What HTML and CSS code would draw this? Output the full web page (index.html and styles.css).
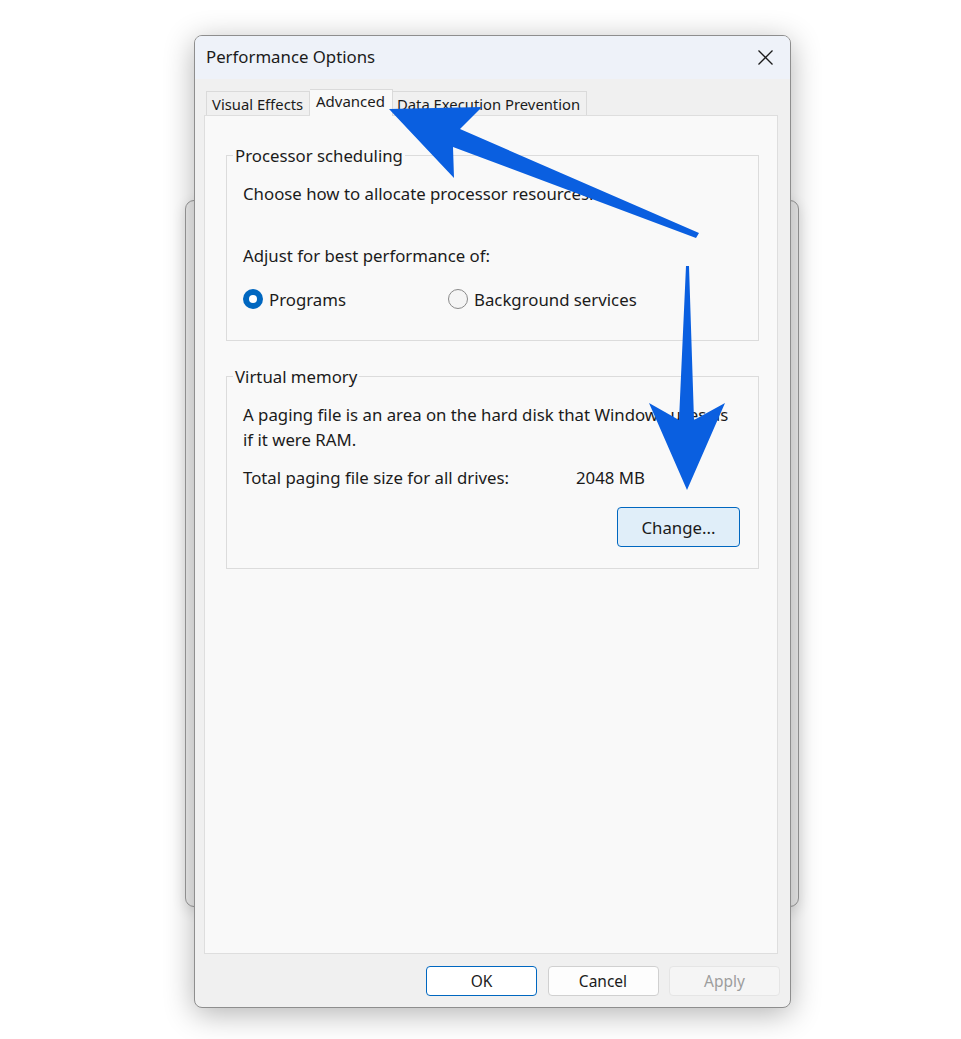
FILE: index.html
```html
<!DOCTYPE html>
<html lang="en">
<head>
<meta charset="utf-8">
<title>Performance Options</title>
<link rel="stylesheet" href="styles.css">
</head>
<body>
<div class="desk">
  <div class="win-back"></div>
  <div class="dialog">
    <div class="titlebar">
      <span class="title">Performance Options</span>
      <svg class="close" width="15" height="15" viewBox="0 0 15 15"><path d="M0.5 0.5 L14.5 14.5 M14.5 0.5 L0.5 14.5" stroke="#1b1b1b" stroke-width="1.3" fill="none"/></svg>
    </div>
    <div class="tabs">
      <div class="tab tab-ve">Visual Effects</div>
      <div class="tab tab-adv active">Advanced</div>
      <div class="tab tab-dep">Data Execution Prevention</div>
    </div>
    <div class="panel">
      <div class="group g1">
        <div class="legend">Processor scheduling</div>
        <div class="line choose">Choose how to allocate processor resources.</div>
        <div class="line adjust">Adjust for best performance of:</div>
        <div class="radios">
          <div class="radio-item first"><span class="radio on"></span><span>Programs</span></div>
          <div class="radio-item"><span class="radio"></span><span>Background services</span></div>
        </div>
      </div>
      <div class="group g2">
        <div class="legend">Virtual memory</div>
        <div class="para">A paging file is an area on the hard disk that Windows uses as<br>if it were RAM.</div>
        <div class="total"><span class="total-label">Total paging file size for all drives:</span><span>2048 MB</span></div>
        <div class="change-row"><button class="btn change">Change...</button></div>
      </div>
    </div>
    <div class="footer">
      <button class="btn ok">OK</button>
      <button class="btn">Cancel</button>
      <button class="btn disabled">Apply</button>
    </div>
  </div>
  <svg class="arrows" width="961" height="1039" viewBox="0 0 961 1039">
    <polygon fill="#0a5fe0" points="389,109 482,107 460,129 699,233 696,238 453,147 454,178"/>
    <polygon fill="#0a5fe0" points="686,266 689,266 694,420 725,403 687,490 649,403 679,420"/>
  </svg>
</div>
</body>
</html>
```

FILE: styles.css
```css
html, body {
  margin: 0;
  padding: 0;
  background: #ffffff;
}

body {
  font-family: "Noto Sans", "Open Sans", sans-serif;
  color: #1b1b1b;
}

.desk {
  position: relative;
  width: 961px;
  height: 1039px;
  overflow: hidden;
}

.win-back {
  position: absolute;
  left: 185px;
  top: 200px;
  width: 612px;
  height: 705px;
  border: 1px solid #9c9c9c;
  border-radius: 9px;
  background: #f0f0f0;
  box-shadow: 0 4px 14px rgba(0, 0, 0, 0.12);
}

.dialog {
  position: absolute;
  left: 194px;
  top: 35px;
  width: 595px;
  height: 971px;
  border: 1px solid #8e8e8e;
  border-radius: 8px;
  background: #f0f0f0;
  box-shadow: 0 6px 30px rgba(0, 0, 0, 0.30);
  display: flex;
  flex-direction: column;
  overflow: hidden;
}

.titlebar {
  height: 43px;
  flex: none;
  background: #eef2f9;
  display: flex;
  align-items: center;
  justify-content: space-between;
  padding: 0 17px 0 11px;
}

.title {
  font-size: 16.8px;
  line-height: 22px;
  margin-top: -1px;
}

.close {
  display: block;
  margin-top: -1px;
}

.tabs {
  flex: none;
  display: flex;
  align-items: flex-end;
  height: 36px;
  padding-left: 11px;
  position: relative;
  z-index: 1;
}

.tab {
  height: 24px;
  border: 1px solid #dadada;
  border-bottom: none;
  background: #f0f0f0;
  font-size: 14.8px;
  line-height: 25px;
  padding: 0 5px;
  box-sizing: border-box;
  white-space: nowrap;
  overflow: hidden;
}

.tab-ve { width: 104px; }
.tab-adv { width: 83px; }
.tab-dep { width: 194px; border-left: none; padding-left: 4px; }

.tab.active {
  height: 27px;
  background: #f9f9f9;
  margin-bottom: -1px;
  border-color: #dadada;
  border-left: none;
  line-height: 22px;
  padding-left: 6px;
  font-size: 15px;
}

.panel {
  flex: 1;
  margin: 0 12px 0 9px;
  background: #f9f9f9;
  border: 1px solid #dedede;
  padding: 39px 18px 0 21px;
}

.group {
  border: 1px solid #dcdcdc;
  padding: 0 16px 0 16px;
  font-size: 16.8px;
}

.legend {
  width: fit-content;
  margin: -11px 0 0 -10px;
  padding: 0 2px;
  line-height: 22px;
  background: #f9f9f9;
}

.line {
  line-height: 24px;
}

.choose {
  margin-top: 15px;
}

.adjust {
  margin-top: 38px;
}

.radios {
  display: flex;
  align-items: center;
  margin-top: 19px;
  margin-bottom: 29px;
  height: 24px;
}

.radio-item {
  display: flex;
  align-items: center;
  gap: 6px;
}

.radio-item.first {
  width: 205px;
}

.radio {
  width: 20px;
  height: 20px;
  box-sizing: border-box;
  border-radius: 50%;
  border: 1px solid #8a8a8a;
  background: #f5f5f5;
  display: flex;
  align-items: center;
  justify-content: center;
}

.radio.on {
  border: none;
  background: #0067c0;
}

.radio.on::after {
  content: "";
  width: 8px;
  height: 8px;
  border-radius: 50%;
  background: #ffffff;
}

.g2 {
  margin-top: 35px;
}

.para {
  margin-top: 14px;
  line-height: 25px;
}

.total {
  display: flex;
  margin-top: 14px;
  line-height: 24px;
}

.total-label {
  width: 333px;
  flex: none;
}

.change-row {
  display: flex;
  justify-content: flex-end;
  margin-top: 17px;
  margin-bottom: 21px;
  padding-right: 2px;
}

.btn {
  font-family: "Noto Sans", "Open Sans", sans-serif;
  font-size: 15.5px;
  color: #1b1b1b;
  width: 111px;
  height: 30px;
  border: 1px solid #d0d0d0;
  border-radius: 4px;
  background: #fdfdfd;
  padding: 0;
}

.btn.change {
  width: 123px;
  height: 40px;
  background: #e0eef9;
  border-color: #0067c0;
  font-size: 16.8px;
}

.btn.ok {
  border-color: #0067c0;
  background: #ffffff;
}

.btn.disabled {
  background: #f5f5f5;
  border-color: #e5e5e5;
  color: #9d9d9d;
}

.footer {
  flex: none;
  display: flex;
  justify-content: flex-end;
  gap: 10.5px;
  padding: 12px 10px 11px 0;
}

.arrows {
  position: absolute;
  left: 0;
  top: 0;
  pointer-events: none;
  z-index: 5;
}
```
